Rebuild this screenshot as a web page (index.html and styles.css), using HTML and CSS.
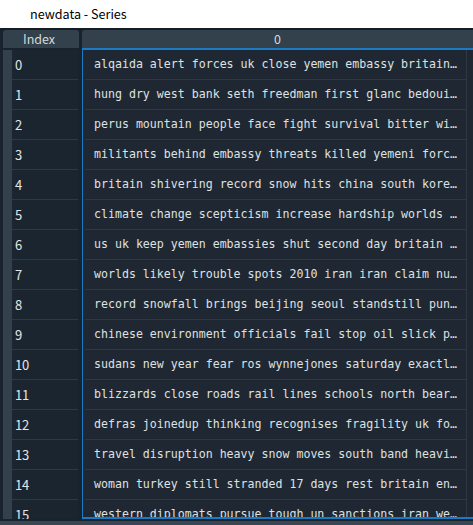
FILE: index.html
```html
<!DOCTYPE html>
<html>
<head>
<meta charset="utf-8">
<link rel="stylesheet" href="styles.css">
</head>
<body>
<div class="window">
  <div class="titlebar">newdata - Series</div>
  <div class="table">
    <div class="hdr-row">
      <div class="hdr hdr-index">Index</div>
      <div class="hdr hdr-col">0</div>
    </div>
    <div class="body-row">
      <div class="index-col">
        <div class="irow"><span class="strip"></span><span class="icell">0</span></div>
        <div class="irow"><span class="strip"></span><span class="icell">1</span></div>
        <div class="irow"><span class="strip"></span><span class="icell">2</span></div>
        <div class="irow"><span class="strip"></span><span class="icell">3</span></div>
        <div class="irow"><span class="strip"></span><span class="icell">4</span></div>
        <div class="irow"><span class="strip"></span><span class="icell">5</span></div>
        <div class="irow"><span class="strip"></span><span class="icell">6</span></div>
        <div class="irow"><span class="strip"></span><span class="icell">7</span></div>
        <div class="irow"><span class="strip"></span><span class="icell">8</span></div>
        <div class="irow"><span class="strip"></span><span class="icell">9</span></div>
        <div class="irow"><span class="strip"></span><span class="icell">10</span></div>
        <div class="irow"><span class="strip"></span><span class="icell">11</span></div>
        <div class="irow"><span class="strip"></span><span class="icell">12</span></div>
        <div class="irow"><span class="strip"></span><span class="icell">13</span></div>
        <div class="irow"><span class="strip"></span><span class="icell">14</span></div>
        <div class="irow"><span class="strip"></span><span class="icell">15</span></div>
      </div>
      <div class="data-col">
        <div class="drow"><span class="dcell">alqaida alert forces uk close yemen embassy britain…</span></div>
        <div class="drow"><span class="dcell">hung dry west bank seth freedman first glanc bedoui…</span></div>
        <div class="drow"><span class="dcell">perus mountain people face fight survival bitter wi…</span></div>
        <div class="drow"><span class="dcell">militants behind embassy threats killed yemeni forc…</span></div>
        <div class="drow"><span class="dcell">britain shivering record snow hits china south kore…</span></div>
        <div class="drow"><span class="dcell">climate change scepticism increase hardship worlds …</span></div>
        <div class="drow"><span class="dcell">us uk keep yemen embassies shut second day britain …</span></div>
        <div class="drow"><span class="dcell">worlds likely trouble spots 2010 iran iran claim nu…</span></div>
        <div class="drow"><span class="dcell">record snowfall brings beijing seoul standstill pun…</span></div>
        <div class="drow"><span class="dcell">chinese environment officials fail stop oil slick p…</span></div>
        <div class="drow"><span class="dcell">sudans new year fear ros wynnejones saturday exactl…</span></div>
        <div class="drow"><span class="dcell">blizzards close roads rail lines schools north bear…</span></div>
        <div class="drow"><span class="dcell">defras joinedup thinking recognises fragility uk fo…</span></div>
        <div class="drow"><span class="dcell">travel disruption heavy snow moves south band heavi…</span></div>
        <div class="drow"><span class="dcell">woman turkey still stranded 17 days rest britain en…</span></div>
        <div class="drow"><span class="dcell">western diplomats pursue tough un sanctions iran we…</span></div>
      </div>
    </div>
    <div class="hscroll"></div>
  </div>
</div>
</body>
</html>
```

FILE: styles.css
```css
html, body {
  margin: 0;
  padding: 0;
  background: #19232d;
}
.window {
  width: 473px;
  height: 525px;
  overflow: hidden;
  display: flex;
  flex-direction: column;
}
.titlebar {
  height: 28px;
  flex: 0 0 28px;
  background: #ffffff;
  color: #000000;
  font-family: "Noto Sans CJK SC", "Noto Sans", sans-serif;
  font-size: 12.6px;
  line-height: 27px;
  padding-left: 30px;
  box-sizing: border-box;
}
.table {
  flex: 1;
  display: flex;
  flex-direction: column;
  background: #19232d;
  border-top: 2px solid #141c24;
  min-height: 0;
}
.hdr-row {
  display: flex;
  height: 18px;
  flex: 0 0 18px;
  padding-left: 3px;
  gap: 3px;
}
.hdr {
  background: #32414b;
  color: #d4dade;
  font-family: "Noto Sans CJK SC", "Noto Sans", sans-serif;
  font-size: 12.5px;
  line-height: 18px;
  text-align: center;
  border-radius: 3px 3px 0 0;
}
.hdr-index {
  width: 76px;
  padding-left: 20px;
  box-sizing: border-box;
  text-align: left;
}
.hdr-col {
  flex: 1;
  border-radius: 3px 0 0 0;
}
.body-row {
  flex: 1;
  display: flex;
  min-height: 0;
  overflow: hidden;
}
.index-col {
  width: 79px;
  padding-left: 3px;
  padding-top: 2px;
  box-sizing: border-box;
  flex: 0 0 79px;
  display: flex;
  flex-direction: column;
}
.irow {
  display: flex;
  height: 30px;
  flex: 0 0 30px;
}
.strip {
  width: 9px;
  background: #32414b;
}
.icell {
  width: 67px;
  border-bottom: 1px solid #2d3a44;
  background: #1b2530;
  color: #e4e6e8;
  font-family: "Noto Sans CJK SC", "Noto Sans", sans-serif;
  font-size: 13px;
  line-height: 29px;
  padding-left: 3px;
  box-sizing: border-box;
  margin-right: 1px;
}
.data-col {
  flex: 1;
  margin-left: 3px;
  border-left: 1px solid #1a7bc4;
  border-top: 2px solid #1a7bc4;
  border-bottom: 2px solid #1a7bc4;
  display: flex;
  flex-direction: column;
  overflow: hidden;
  height: 471px;
  box-sizing: border-box;
  padding-right: 6px;
  background: #1f2832;
}
.drow {
  height: 30px;
  flex: 0 0 30px;
  display: flex;
  border-right: 1px solid #2d3a44;
}
.dcell {
  flex: 1;
  margin-left: 2px;
  border-bottom: 1px solid #2d3a44;
  color: #dfe1e2;
  font-family: "DejaVu Sans Mono", monospace;
  font-size: 11.6px;
  line-height: 29px;
  padding-left: 9px;
  white-space: nowrap;
  overflow: hidden;
}
.hscroll {
  height: 4px;
  flex: 0 0 4px;
  background: #3a4651;
  margin-top: 2px;
}
```
